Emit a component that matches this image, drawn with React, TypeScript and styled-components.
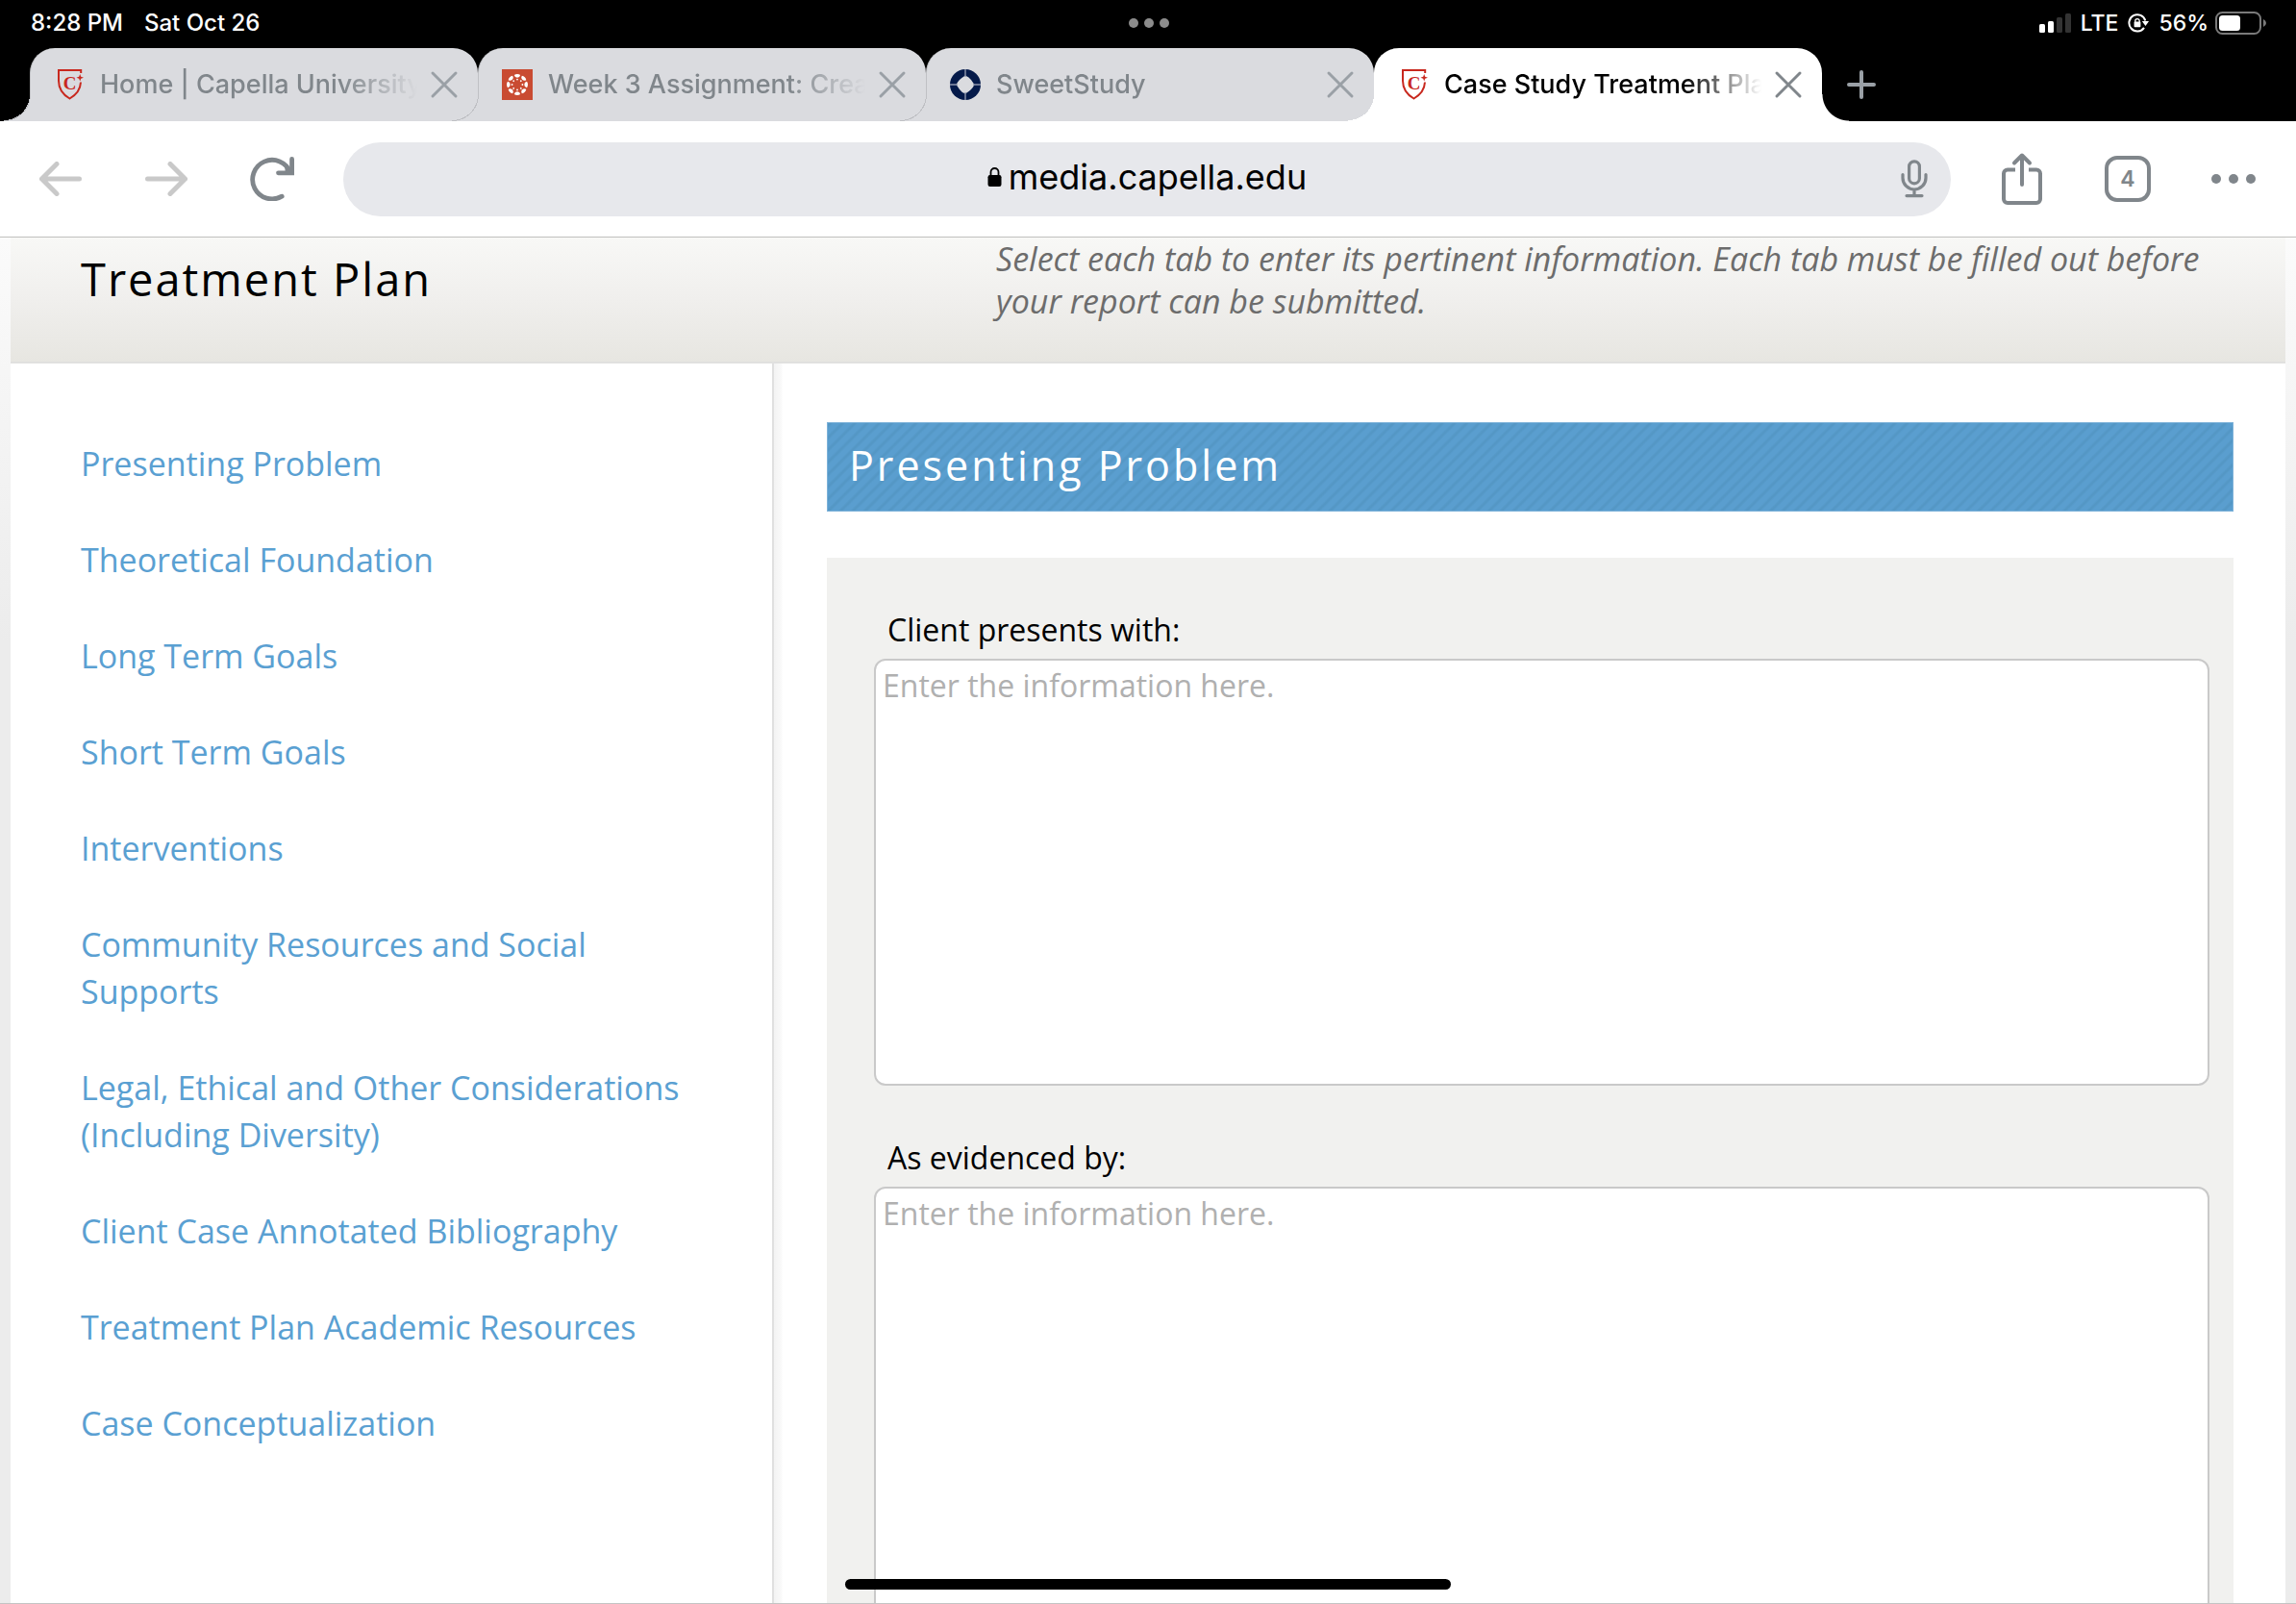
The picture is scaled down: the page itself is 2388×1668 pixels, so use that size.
import React from 'react';
import styled, { createGlobalStyle, css } from 'styled-components';

const ui = `Inter, "Liberation Sans", sans-serif`;
const body = `"Open Sans", "Noto Sans", sans-serif`;
const grey = '#80868b';

const GlobalStyle = createGlobalStyle`
  *, *::before, *::after { box-sizing: border-box; }
  body { margin: 0; background: #fff; }
  button { border: 0; padding: 0; margin: 0; background: none; color: inherit; font: inherit; cursor: pointer; }
  svg { display: block; flex: none; }
`;

const Screen = styled.div`
  display: flex;
  flex-direction: column;
  height: 100vh;
  overflow: hidden;
  position: relative;
  font-family: ${body};
`;

/* ---------- status bar ---------- */

const StatusBar = styled.div`
  display: grid;
  grid-template-columns: 1fr auto 1fr;
  align-items: center;
  height: 50px;
  padding: 0 30px 2px 32px;
  background: #000;
  color: #fff;
  font: 500 23px/28px ${ui};
`;

const Clock = styled.div`
  display: flex;
  gap: 22px;
  font-size: 24px;
`;

const StatusGroup = styled.div<{ $gap: number }>`
  display: flex;
  align-items: center;
  justify-content: flex-end;
  gap: ${(p) => p.$gap}px;
`;

/* ---------- tab strip ---------- */

const TabStrip = styled.div`
  display: flex;
  height: 76px;
  padding-left: 31px;
  background: #000;
`;

const flare = css`
  content: '';
  position: absolute;
  bottom: 0;
  width: 28px;
  height: 28px;
`;

const Tab = styled.div<{ $active?: boolean }>`
  position: relative;
  z-index: ${(p) => (p.$active ? 1 : 0)};
  display: flex;
  align-items: center;
  flex: 0 1 466px;
  min-width: 0;
  height: 76px;
  padding: 0 7px 0 24px;
  border-left: 1px solid ${(p) => (p.$active ? '#fff' : '#bfc0c4')};
  border-radius: 26px 26px 0 0;
  background: ${(p) => (p.$active ? '#fff' : '#dadbdf')};
  color: ${(p) => (p.$active ? '#000' : grey)};

  &::before {
    ${flare}
    left: -28px;
    background: radial-gradient(
      circle at 0 0,
      transparent 27px,
      ${(p) => (p.$active ? '#fff' : '#bfc0c4')} 27px,
      ${(p) => (p.$active ? '#fff' : '#bfc0c4')} 28px,
      ${(p) => (p.$active ? '#fff' : '#dadbdf')} 28px
    );
  }

  ${(p) =>
    p.$active &&
    css`
      &::after {
        ${flare}
        right: -28px;
        background: radial-gradient(circle at 100% 0, transparent 27px, #fff 28px);
      }
    `}
`;

const TabTitle = styled.button`
  display: flex;
  flex: 1;
  align-items: center;
  gap: 16px;
  min-width: 0;
  height: 64px;
`;

const TabLabel = styled.span`
  flex: 1;
  overflow: hidden;
  white-space: nowrap;
  text-align: left;
  font: 500 27px/36px ${ui};
  mask-image: linear-gradient(to right, #000 calc(100% - 80px), transparent);
`;

const TabClose = styled.button<{ $active?: boolean }>`
  display: grid;
  place-items: center;
  width: 56px;
  height: 64px;
  color: ${(p) => (p.$active ? grey : '#9aa0a6')};
`;

const NewTab = styled.button`
  display: grid;
  place-items: center;
  width: 82px;
  height: 76px;
  color: #9aa0a6;
`;

/* ---------- toolbar ---------- */

const Toolbar = styled.div`
  display: flex;
  align-items: center;
  gap: 19px;
  height: 121px;
  padding: 0 10px 0 8px;
  border-bottom: 1px solid #c0c0be;
  background: #fff;
  color: ${grey};
`;

const ToolGroup = styled.div`
  display: flex;
`;

const ToolButton = styled.button<{ $dim?: boolean }>`
  display: grid;
  place-items: center;
  width: 110px;
  height: 80px;
  color: ${(p) => (p.$dim ? '#c9c9c9' : grey)};
`;

const AddressBar = styled.div`
  display: grid;
  grid-template-columns: 76px 1fr 76px;
  align-items: center;
  flex: 1;
  height: 77px;
  border-radius: 39px;
  background: #e7e8ec;
`;

const Address = styled.button`
  grid-column: 2;
  display: flex;
  align-items: center;
  justify-content: center;
  gap: 7px;
  height: 77px;
  padding-bottom: 4px;
  color: #000;
  font: 400 36px/48px ${ui};
`;

const MicButton = styled.button`
  display: grid;
  place-items: center;
  height: 77px;
`;

const TabCount = styled.span`
  display: grid;
  place-items: center;
  width: 48px;
  height: 48px;
  border: 4px solid ${grey};
  border-radius: 13px;
  font: 600 23px/28px ${ui};
`;

/* ---------- web page ---------- */

const Viewport = styled.div`
  flex: 1;
  min-height: 0;
  display: flex;
  flex-direction: column;
  padding: 0 11px;
  overflow: hidden;
  border-bottom: 1px solid #c4c4c4;
  background: linear-gradient(#fbfbfb, #ececec 420px);
`;

const PageHeader = styled.header`
  display: grid;
  grid-template-columns: 952fr 1287fr;
  align-items: start;
  padding: 0 54px 41px 73px;
  border-bottom: 2px solid #e0e0df;
  background: linear-gradient(#f8f8f6, #f0efed 50%, #e7e6e1);
`;

const PageTitle = styled.h1`
  margin: 0;
  padding-top: 12px;
  color: #000;
  font-weight: 400;
  font-size: 47px;
  line-height: 62px;
  letter-spacing: 2px;
`;

const Instructions = styled.p`
  margin: 0;
  color: #6c6c6c;
  font-style: italic;
  font-size: 34px;
  line-height: 44px;
`;

const Columns = styled.div`
  display: grid;
  grid-template-columns: 794fr 1572fr;
  flex: 1;
  min-height: 0;
  background: #fff;
`;

const Sidebar = styled.nav`
  padding: 80px 73px 0;
  border-right: 2px solid #e0e0e0;
`;

const NavList = styled.ul`
  display: flex;
  flex-direction: column;
  gap: 51px;
  margin: 0;
  padding: 0;
  list-style: none;
`;

const NavLink = styled.a`
  display: block;
  color: #5aa0d2;
  font-size: 34px;
  line-height: 49px;
  text-decoration: none;
`;

const Content = styled.main`
  min-width: 0;
  padding: 61px 54px 0 55px;
  background: linear-gradient(to right, #f3f3f3, #fafafa 8px, #fff 9px);
`;

const Banner = styled.h2`
  margin: 0 0 48px;
  padding: 14px 22px 17px;
  border: 1px solid #7db2d9;
  background: repeating-linear-gradient(
    -45deg,
    #5a9ecf 0,
    #5a9ecf 4px,
    #5497c5 6px,
    #5497c5 7px,
    #5a9ecf 9px
  );
  color: #fff;
  font-weight: 400;
  font-size: 43px;
  line-height: 60px;
  letter-spacing: 3px;
`;

const Panel = styled.form`
  display: flex;
  flex-direction: column;
  gap: 53px;
  padding: 53px 25px 53px 49px;
  background: #f1f1ef;
`;

const Field = styled.div`
  display: flex;
  flex-direction: column;
  gap: 8px;
`;

const Label = styled.label`
  padding-left: 14px;
  color: #000;
  font-size: 32px;
  line-height: 44px;
`;

const Textarea = styled.textarea`
  display: block;
  width: 100%;
  height: 444px;
  padding: 4px 7px;
  border: 2px solid #c9c9c9;
  border-radius: 12px;
  background: #fff;
  resize: none;
  outline: 0;
  color: #000;
  font-family: ${body};
  font-size: 32px;
  line-height: 44px;

  &::placeholder {
    color: #b0b0b0;
    opacity: 1;
  }
`;

const HomeIndicator = styled.div`
  position: absolute;
  left: 50%;
  bottom: 15px;
  width: 630px;
  height: 11px;
  margin-left: -315px;
  border-radius: 6px;
  background: #000;
`;

/* ---------- icons ---------- */

const CapellaIcon = () => (
  <svg width="32" height="32" viewBox="0 0 32 32" aria-hidden="true">
    <path d="M28.2 4V1H5v11c0 8.500 4.500 14.500 11.500 18.500C23.500 26.500 27.600 21 28 13.500" fill="none" stroke="#c8281e" strokeWidth="2" />
    <path d="M27.200 5l1 2.800 2.800 1-2.800 1-1 2.800-1-2.800-2.800-1 2.800-1z" fill="#c8281e" />
    <text x="16.500" y="20.500" textAnchor="middle" fontFamily="Liberation Serif, serif" fontWeight="700" fontSize="19" fill="#c8281e">C</text>
  </svg>
);

const angles = [0, 45, 90, 135, 180, 225, 270, 315];

const CanvasIcon = () => (
  <svg width="32" height="32" viewBox="0 0 32 32" aria-hidden="true">
    <rect width="32" height="32" fill="#c94b32" />
    {angles.map((a) => (
      <g key={a} transform={`rotate(${a} 16 16)`} fill="#fff">
        <path d="M12.800 6Q16 4 19.200 6Q18.600 8.700 16 8.700T12.800 6z" />
        <circle cx="16" cy="10.600" r="0.900" />
      </g>
    ))}
  </svg>
);

const SweetStudyIcon = () => (
  <svg width="32" height="32" viewBox="0 0 32 32" aria-hidden="true">
    <circle cx="16" cy="16" r="16" fill="#051a4a" />
    <path d="M16 6.500Q20 8 22 11T25.500 16Q24 19 22 21T16 25.500Q12 24 10 21T6.500 16Q8 13 10 11T16 6.500z" fill="#dadbdf" />
    <path d="M16 0v8M16 24v8M0 16h8M24 16h8" stroke="#8f97ad" strokeWidth="1.400" />
  </svg>
);

const CloseIcon = () => (
  <svg width="30" height="30" viewBox="0 0 30 30" fill="none" stroke="currentColor" strokeWidth="3" strokeLinecap="round" aria-hidden="true">
    <path d="M3 3l24 24M27 3L3 27" />
  </svg>
);

const PlusIcon = () => (
  <svg width="30" height="30" viewBox="0 0 30 30" fill="none" stroke="currentColor" strokeWidth="4" strokeLinecap="round" aria-hidden="true">
    <path d="M15 2v26M2 15h26" />
  </svg>
);

const ArrowIcon = ({ flip }: { flip?: boolean }) => (
  <svg width="44" height="36" viewBox="0 0 44 36" fill="none" stroke="currentColor" strokeWidth="5" strokeLinecap="round" strokeLinejoin="round" aria-hidden="true">
    <path d={flip ? 'M2.500 18h39M26 2.500L41.500 18 26 33.500' : 'M41.500 18h-39M18 2.500L2.500 18 18 33.500'} />
  </svg>
);

const ReloadIcon = () => (
  <svg width="46" height="46" viewBox="0 0 46 46" fill="none" stroke="currentColor" strokeWidth="4.800" strokeLinecap="round" aria-hidden="true">
    <path d="M33.200 41.200A20.300 20.300 0 1 1 42 16.500" />
    <path d="M43.600 2.500V16.800H29.500" />
    <path d="M36 10l8 7h-7z" fill="currentColor" stroke="none" />
  </svg>
);

const LockIcon = () => (
  <svg width="15" height="22" viewBox="0 0 15 22" aria-hidden="true">
    <path d="M3.500 10V6a4 4 0 0 1 8 0v4" fill="none" stroke="#000" strokeWidth="1.800" />
    <rect x="0.500" y="9" width="14" height="12" rx="2.200" fill="#000" />
  </svg>
);

const MicIcon = () => (
  <svg width="28" height="40" viewBox="0 0 28 40" fill="none" stroke="currentColor" strokeWidth="3.200" strokeLinecap="round" aria-hidden="true">
    <rect x="8.600" y="1.800" width="10.800" height="23" rx="5.400" />
    <path d="M2 15.500v3.500a12 12 0 0 0 24 0v-3.500M14 31.500v6M6 37.600h16" />
  </svg>
);

const ShareIcon = () => (
  <svg width="44" height="56" viewBox="0 0 44 56" fill="none" stroke="currentColor" strokeWidth="4" aria-hidden="true">
    <path d="M15 18.500H7a4 4 0 0 0-4 4V49a4 4 0 0 0 4 4h30a4 4 0 0 0 4-4V22.500a4 4 0 0 0-4-4h-8" />
    <path d="M22 34V4M14 11.500L22 3.500l8 8" strokeLinecap="round" strokeLinejoin="round" />
  </svg>
);

const Dots = ({ size, step }: { size: number; step: number }) => (
  <svg width={size + step * 2} height={size} aria-hidden="true" fill="currentColor">
    {[0, 1, 2].map((i) => (
      <circle key={i} cx={size / 2 + step * i} cy={size / 2} r={size / 2} />
    ))}
  </svg>
);

const Multitask = styled.button`
  color: #8c8c8c;
`;

const SignalIcon = () => (
  <svg width="33" height="20" viewBox="0 0 33 20" fill="#fff" aria-hidden="true">
    <rect x="0" y="11" width="6" height="9" rx="1.500" />
    <rect x="9" y="8" width="6" height="12" rx="1.500" />
    <rect x="18" y="4" width="6" height="16" rx="1.500" fill="#333" />
    <rect x="27" y="0" width="6" height="20" rx="1.500" fill="#333" />
  </svg>
);

const RotationLockIcon = () => (
  <svg width="22" height="20" viewBox="0 0 22 20" aria-hidden="true">
    <path d="M18.300 7.500A8.600 8.600 0 1 0 17 14.800" fill="none" stroke="#fff" strokeWidth="2" />
    <path d="M14.800 8H22l-3.500 5z" fill="#fff" />
    <path d="M7.800 9V7.800a2.200 2.200 0 0 1 4.400 0V9" fill="none" stroke="#fff" strokeWidth="1.300" />
    <rect x="6.600" y="8.600" width="6.800" height="5.600" rx="0.800" fill="#fff" />
  </svg>
);

const BatteryIcon = () => (
  <svg width="54" height="24" viewBox="0 0 54 24" aria-hidden="true">
    <rect x="1" y="1" width="46" height="22" rx="6.500" fill="none" stroke="#7a7a7a" strokeWidth="2" />
    <rect x="4" y="4" width="22" height="16" rx="3.500" fill="#fff" />
    <path d="M50 8q3 1.500 3 4t-3 4z" fill="#7a7a7a" />
  </svg>
);

/* ---------- data ---------- */

const tabs = [
  { title: 'Home | Capella University', Icon: CapellaIcon },
  { title: 'Week 3 Assignment: Create', Icon: CanvasIcon },
  { title: 'SweetStudy', Icon: SweetStudyIcon },
  { title: 'Case Study Treatment Plan', Icon: CapellaIcon, active: true },
];

const sections = [
  'Presenting Problem',
  'Theoretical Foundation',
  'Long Term Goals',
  'Short Term Goals',
  'Interventions',
  'Community Resources and Social Supports',
  'Legal, Ethical and Other Considerations (Including Diversity)',
  'Client Case Annotated Bibliography',
  'Treatment Plan Academic Resources',
  'Case Conceptualization',
];

const fields = [
  { id: 'presents-with', label: 'Client presents with:' },
  { id: 'evidenced-by', label: 'As evidenced by:' },
];

export default function App() {
  return (
    <Screen>
      <GlobalStyle />
      <StatusBar>
        <Clock>
          <span>8:28 PM</span>
          <span>Sat Oct 26</span>
        </Clock>
        <Multitask aria-label="Multitasking">
          <Dots size={10} step={16} />
        </Multitask>
        <StatusGroup $gap={10}>
          <SignalIcon />
          <span>LTE</span>
          <RotationLockIcon />
          <StatusGroup $gap={7}>
            <span>56%</span>
            <BatteryIcon />
          </StatusGroup>
        </StatusGroup>
      </StatusBar>

      <TabStrip>
        {tabs.map(({ title, Icon, active }) => (
          <Tab key={title} $active={active}>
            <TabTitle>
              <Icon />
              <TabLabel>{title}</TabLabel>
            </TabTitle>
            <TabClose $active={active} aria-label={`Close ${title}`}>
              <CloseIcon />
            </TabClose>
          </Tab>
        ))}
        <NewTab aria-label="New tab">
          <PlusIcon />
        </NewTab>
      </TabStrip>

      <Toolbar>
        <ToolGroup>
          <ToolButton $dim aria-label="Back"><ArrowIcon /></ToolButton>
          <ToolButton $dim aria-label="Forward"><ArrowIcon flip /></ToolButton>
          <ToolButton aria-label="Reload"><ReloadIcon /></ToolButton>
        </ToolGroup>
        <AddressBar>
          <Address>
            <LockIcon />
            media.capella.edu
          </Address>
          <MicButton aria-label="Voice search"><MicIcon /></MicButton>
        </AddressBar>
        <ToolGroup>
          <ToolButton aria-label="Share"><ShareIcon /></ToolButton>
          <ToolButton aria-label="Open tabs"><TabCount>4</TabCount></ToolButton>
          <ToolButton aria-label="Menu"><Dots size={10} step={18} /></ToolButton>
        </ToolGroup>
      </Toolbar>

      <Viewport>
        <PageHeader>
          <PageTitle>Treatment Plan</PageTitle>
          <Instructions>
            Select each tab to enter its pertinent information. Each tab must be filled out before your report can be
            submitted.
          </Instructions>
        </PageHeader>
        <Columns>
          <Sidebar>
            <NavList>
              {sections.map((name) => (
                <li key={name}>
                  <NavLink href="#">{name}</NavLink>
                </li>
              ))}
            </NavList>
          </Sidebar>
          <Content>
            <Banner>Presenting Problem</Banner>
            <Panel>
              {fields.map((f) => (
                <Field key={f.id}>
                  <Label htmlFor={f.id}>{f.label}</Label>
                  <Textarea id={f.id} placeholder="Enter the information here." />
                </Field>
              ))}
            </Panel>
          </Content>
        </Columns>
      </Viewport>
      <HomeIndicator />
    </Screen>
  );
}
